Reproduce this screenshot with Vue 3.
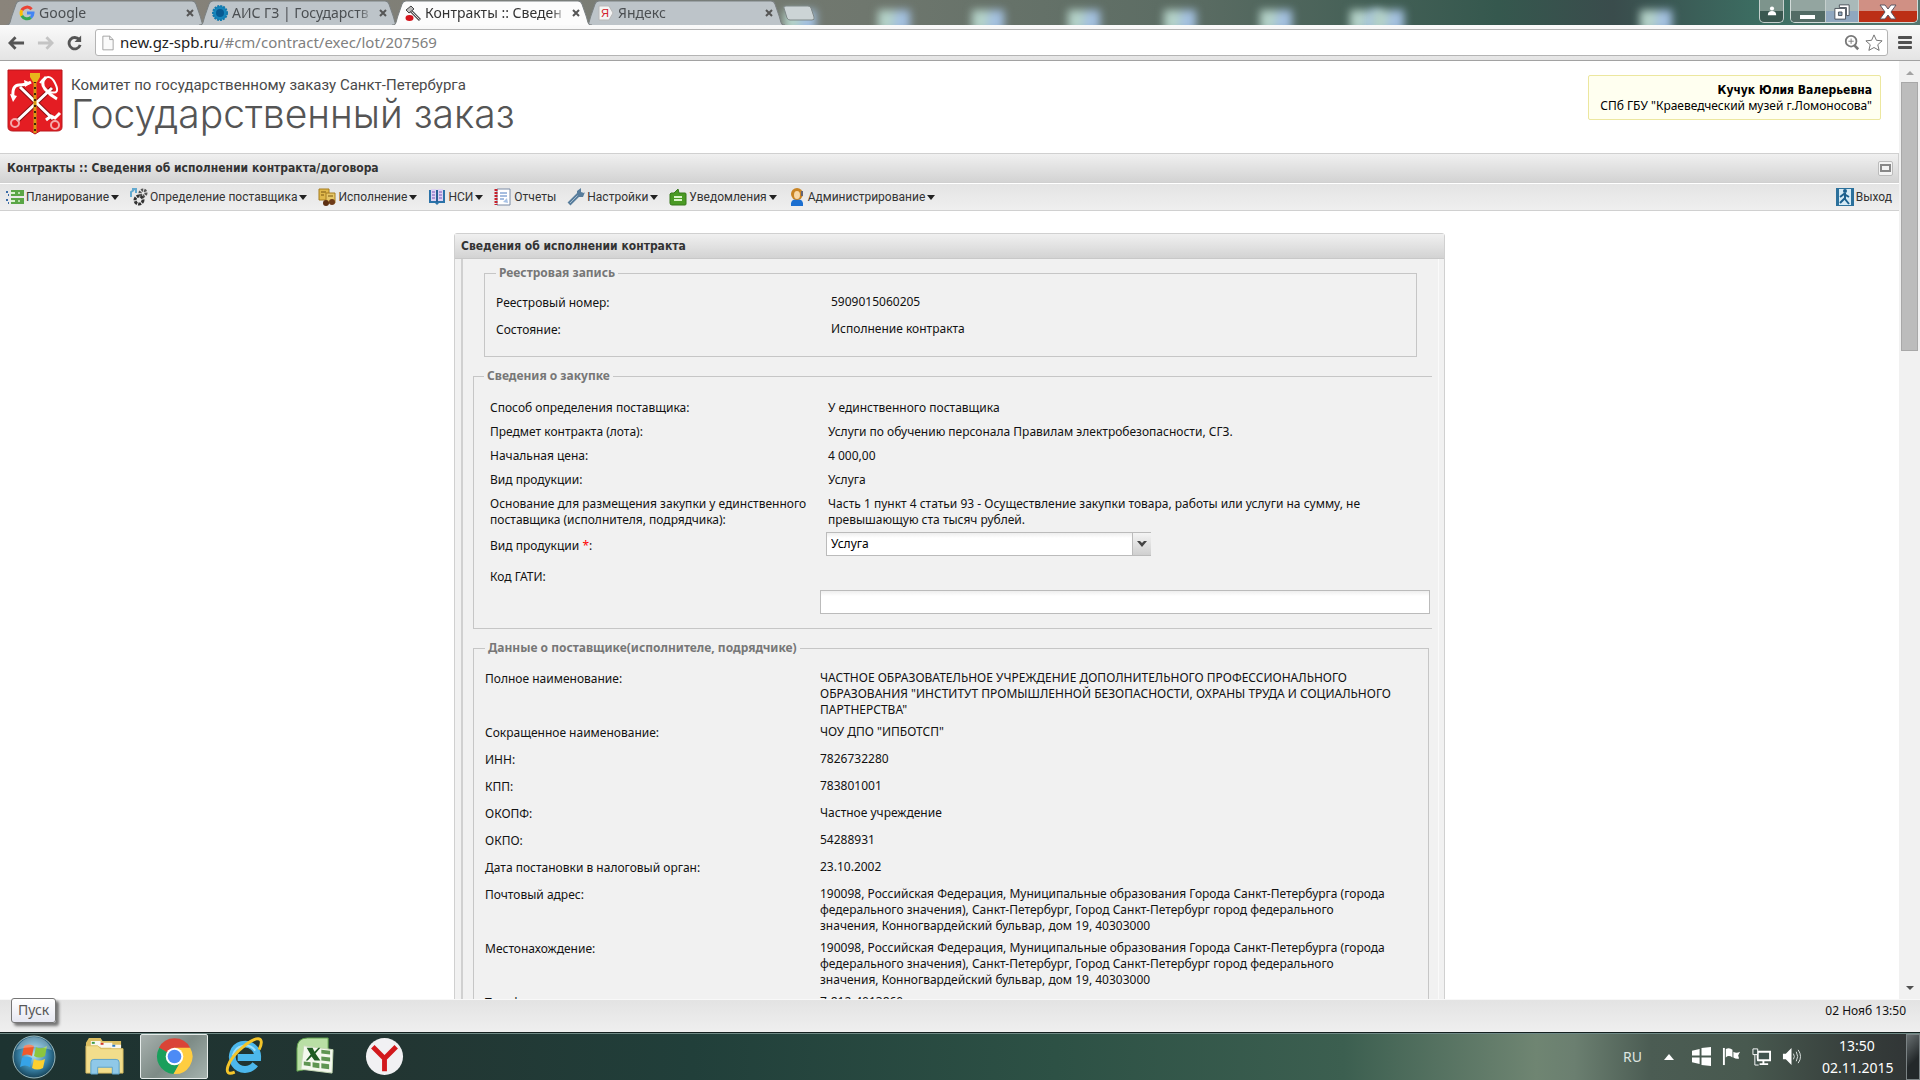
<template>
  <div class="screen">
    <header class="tab-strip">
      <span v-for="left in ghosts" :key="left" class="desk-ghost" :style="{ left: left + 'px' }"></span>
      <nav class="tabs">
        <button
          v-for="(tab, ind) in tabs"
          :key="tab.title"
          class="tab"
          :class="{ active: ind === activeTab }"
          @click="activeTab = ind"
        >
          <svg class="tab-shape" viewBox="0 0 200 24" preserveAspectRatio="none">
            <path d="M0 24 C5 24 4 20 6 15 L10 4 Q11 1 14 1 L186 1 Q189 1 190 4 L194 15 C196 20 195 24 200 24" />
          </svg>
          <svg v-if="tab.icon === 'google'" class="favicon" viewBox="0 0 16 16">
            <g fill="none" stroke-width="3">
              <path stroke="#ea4335" d="M12.6 4.2A6 6 0 0 0 2.8 5.2" />
              <path stroke="#fbbc05" d="M2.8 5.2a6 6 0 0 0 0 5.6" />
              <path stroke="#34a853" d="M2.8 10.8a6 6 0 0 0 9 1.7" />
              <path stroke="#4285f4" d="M11.8 12.5A6 6 0 0 0 14 8H8" />
            </g>
          </svg>
          <svg v-else-if="tab.icon === 'ais'" class="favicon" viewBox="0 0 16 16">
            <circle cx="8" cy="8" r="7" fill="#1685bb" stroke="#1279ad" stroke-width="2" stroke-dasharray="2 1" />
            <circle cx="8" cy="8" r="4" fill="#075a92" />
          </svg>
          <svg v-else-if="tab.icon === 'hammer'" class="favicon" viewBox="0 0 16 16">
            <path d="M5 5l10 10" stroke="#555" stroke-width="3" />
            <path d="M5.500 5.500l9 9" stroke="#ddd" stroke-width="1" />
            <path d="M1 5l5-4 3 3-5 4z" fill="#bbb" stroke="#444" />
            <ellipse cx="4.500" cy="13" rx="4" ry="3" fill="#d5141c" />
          </svg>
          <svg v-else class="favicon" viewBox="0 0 16 16">
            <path d="M1 1h10l4 7-4 7H1z" fill="#f4f4f4" stroke="#b9b9b9" />
            <text x="3" y="12" font-size="11" font-family="Liberation Sans" fill="#d3202c">Я</text>
          </svg>
          <span class="tab-title">{{ tab.title }}</span>
          <svg class="tab-close" viewBox="0 0 8 8"><path d="M1 1l6 6M7 1l-6 6" /></svg>
        </button>
        <button class="new-tab" aria-label="Новая вкладка">
          <svg viewBox="0 0 32 16"><path d="M1 3q-1-2 2-2h22q2 0 3 2l3 9q1 3-2 3H7q-2 0-3-2z" /></svg>
        </button>
      </nav>
      <div class="win-buttons">
        <button class="win user" aria-label="Профиль">
          <svg viewBox="0 0 12 12"><circle cx="6" cy="3" r="2.500" /><path d="M1 11q0-5 5-5t5 5z" /></svg>
        </button>
        <div class="win-group">
          <button class="win" aria-label="Свернуть">
            <svg viewBox="0 0 18 16"><path d="M1 11h15v4H1z" /></svg>
          </button>
          <button class="win light" aria-label="Восстановить">
            <svg viewBox="0 0 18 18">
              <path fill-rule="evenodd" d="M6 1h11v12h-3V4H6z" stroke="#454c55" />
              <path fill-rule="evenodd" d="M1 5h12v12H1zM5 9v4h4V9z" stroke="#454c55" />
            </svg>
          </button>
          <button class="win close" aria-label="Закрыть">
            <svg viewBox="0 0 18 16">
              <path d="M1 1h5l3 4 3-4h5l-5 7 5 7h-5l-3-4-3 4H1l5-7z" stroke="#5d5560" />
            </svg>
          </button>
        </div>
      </div>
    </header>

    <div class="toolbar">
      <button class="tool" aria-label="Назад">
        <svg viewBox="0 0 18 16"><path d="M2 8h15M8 2L2 8l6 6" stroke="#555" /></svg>
      </button>
      <button class="tool" aria-label="Вперед">
        <svg viewBox="0 0 18 16"><path d="M1 8h15M10 2l6 6-6 6" stroke="#c4c4c4" /></svg>
      </button>
      <button class="tool" aria-label="Обновить">
        <svg viewBox="0 0 18 16">
          <path d="M14 4.500A6 6 0 1 0 15 10" stroke="#555" />
          <path d="M16 0v7H9z" fill="#555" />
        </svg>
      </button>
      <div class="address">
        <svg class="page-icon" viewBox="0 0 14 18"><path d="M1 1h8l4 4v12H1zM9 1v4h4" /></svg>
        <span class="url"><b>new.gz-spb.ru</b>/#cm/contract/exec/lot/207569</span>
        <svg class="zoom-icon" viewBox="0 0 18 18">
          <circle cx="8" cy="7" r="6" /><path d="M8 4v6M5 7h6" stroke-width="1" /><path d="M12 12l4 4" stroke-width="3" />
        </svg>
        <svg class="star" viewBox="0 0 20 20">
          <path d="M10 1l2.700 6 6.300.6-4.800 4.300 1.500 6.300L10 15l-5.700 3.200 1.500-6.300L1 7.600 7.300 7z" />
        </svg>
      </div>
      <button class="burger" aria-label="Меню"><i></i><i></i><i></i></button>
    </div>

    <div class="viewport">
      <div class="page">
        <div class="site-head">
          <a class="logo" href="#">
            <svg class="crest" viewBox="0 0 56 66">
              <path d="M1 1h54v57q0 4-5 4H33l-5 3-5-3H6q-5 0-5-4z" fill="#e41d23" stroke="#b9171c" />
              <g fill="none" stroke="#8c1014" stroke-width="5">
                <path d="M10 52L45 19M46 50L13 18" />
              </g>
              <g fill="none" stroke="#fff" stroke-width="3">
                <path d="M10 52L45 19M46 50L13 18" />
                <path d="M6 28Q5 16 12 16T24 13" />
                <path d="M39 8Q33 14 38 20T50 30" />
                <path d="M33 14Q42 2 48 14T43 23" stroke-width="2" />
              </g>
              <path d="M3 25l3 8 4-6zM17 11l7 3-6 4z" fill="#fff" />
              <circle cx="8" cy="54" r="4" fill="none" stroke="#f3a9ab" stroke-width="2" />
              <circle cx="48" cy="56" r="4" fill="none" stroke="#f3a9ab" stroke-width="2" />
              <path d="M39 51l5-4 4 2 5-5" fill="none" stroke="#fff" stroke-width="3" />
              <path d="M28 8v56" stroke="#d99b14" stroke-width="3" />
              <path d="M28 12v52" stroke="#3d2a05" stroke-width="2" stroke-dasharray="2 4" />
              <path d="M23 4h10v4l-3 5h-4l-3-5z" fill="#e8b71c" />
            </svg>
            <span class="logo-text">
              <span class="logo-small">Комитет по государственному заказу Санкт-Петербурга</span>
              <span class="logo-big">Государственный заказ</span>
            </span>
          </a>
          <div class="user-box">
            <b>Кучук Юлия Валерьевна</b>
            <span>СПб ГБУ "Краеведческий музей г.Ломоносова"</span>
          </div>
        </div>

        <div class="title-bar">
          <h1>Контракты :: Сведения об исполнении контракта/договора</h1>
          <button class="restore" aria-label="Развернуть"><i></i></button>
        </div>

        <nav class="menu">
          <button v-for="item in menu" :key="item.title" class="menu-item">
            <svg class="menu-icon" viewBox="0 0 18 18">
              <template v-if="item.icon === 'plan'">
                <path d="M5 2h13v6H5zM5 10h13v6H5z" fill="#5aa646" />
                <path d="M5 5h4M5 13h4" stroke="#d9f2cf" stroke-width="2" />
                <path d="M0 4h2M0 12h2M2 7h1M2 15h1" stroke="#3b6ca8" stroke-width="2" />
                <circle cx="13" cy="5" r="1" fill="#d9f2cf" /><circle cx="13" cy="13" r="1" fill="#d9f2cf" />
              </template>
              <template v-else-if="item.icon === 'gears'">
                <circle cx="13" cy="5" r="3" fill="none" stroke="#555" stroke-width="3" stroke-dasharray="2 1" />
                <circle cx="9" cy="12" r="4" fill="none" stroke="#333" stroke-width="3" stroke-dasharray="3 1" />
                <path d="M1 9V4l3-2M2 1h4v4" fill="none" stroke="#63a9cf" stroke-width="2" />
              </template>
              <template v-else-if="item.icon === 'exec'">
                <path d="M1 1h10v11H1z" fill="#dfb84b" stroke="#a67c21" />
                <path d="M8 5h9v10H8z" fill="#e7c767" stroke="#a67c21" />
                <path d="M3 4h5M3 7h3M10 8h5" stroke="#7b5712" />
                <circle cx="8" cy="15" r="3" fill="#5c2f12" /><circle cx="14" cy="14" r="3" fill="#6e3b18" />
              </template>
              <template v-else-if="item.icon === 'book'">
                <path d="M1 2h16v13h-6l-2 2-2-2H1z" fill="#2a72a8" />
                <path d="M3 1h5l1 1 1-1h5v12h-5l-1 1-1-1H3z" fill="#dcd2f3" />
                <path d="M9 2v12" stroke="#2a5f94" stroke-width="2" />
                <path d="M4 4h3M4 7h3M4 10h3M11 4h3M11 7h3M11 10h3" stroke="#7a54b8" />
              </template>
              <template v-else-if="item.icon === 'report'">
                <path d="M3 1h13v16H3z" fill="#fff" stroke="#7a8ba5" />
                <path d="M2 1v16" stroke="#c8202a" stroke-width="3" stroke-dasharray="2 1" />
                <path d="M6 5h7M6 8h7M6 11h4" stroke="#4e7cc0" /><path d="M9 14l4-4 1 5z" fill="#a9c3e6" />
              </template>
              <template v-else-if="item.icon === 'wrench'">
                <path d="M2 16L12 6" stroke="#587d9c" stroke-width="4" />
                <path d="M3 15l9-9" stroke="#a4bccd" />
                <path d="M10 7V3l4-3v4l3 1 1-1-2 5h-4z" fill="#587d9c" />
              </template>
              <template v-else-if="item.icon === 'note'">
                <path d="M2 5h3l4-4 1 4h6q1 0 1 1v10q0 1-1 1H3q-2 0-2-2V6z" fill="#4a9a24" stroke="#36781a" />
                <path d="M5 9h8M5 12h8" stroke="#d9f4c8" stroke-width="2" />
              </template>
              <template v-else>
                <path d="M3 18q-1-7 6-7t6 7z" fill="#1c6fd0" />
                <circle cx="9" cy="6" r="6" fill="#c98424" /><ellipse cx="9" cy="7" rx="3" ry="4" fill="#f8d8a6" />
                <path d="M14 3v5" stroke="#667" stroke-width="2" />
              </template>
            </svg>
            <span>{{ item.title }}</span>
            <i v-if="item.arrow" class="caret"></i>
          </button>
          <button class="menu-item exit">
            <svg class="menu-icon" viewBox="0 0 18 18">
              <path d="M0 0h18v18H0z" fill="#2c719c" />
              <path d="M3 1h12v16H3z" fill="#d5eaf5" />
              <circle cx="9" cy="3" r="2" fill="#1b5f8d" />
              <path d="M9 5v6l4 5M9 10l-5 5M4 9l4-3 5 3" fill="none" stroke="#1b5f8d" stroke-width="2" />
            </svg>
            <span>Выход</span>
          </button>
        </nav>

        <main class="content">
          <section class="panel">
            <h2>Сведения об исполнении контракта</h2>
            <div class="panel-body">
              <fieldset class="registry">
                <legend>Реестровая запись</legend>
                <dl v-for="row in registry" :key="row[0]" class="row">
                  <dt>{{ row[0] }}:</dt>
                  <dd>{{ row[1] }}</dd>
                </dl>
              </fieldset>

              <fieldset class="purchase">
                <legend>Сведения о закупке</legend>
                <dl v-for="row in purchase" :key="row[0]" class="row">
                  <dt>{{ row[0] }}:</dt>
                  <dd>{{ row[1] }}</dd>
                </dl>
                <div class="select-row">
                  <label for="product">Вид продукции <em>*</em>:</label>
                  <div class="select-box">
                    <select id="product" v-model="product">
                      <option>Услуга</option>
                      <option>Товар</option>
                      <option>Работа</option>
                    </select>
                    <span class="select-arrow">
                      <svg viewBox="0 0 10 6"><path d="M0 0h3l2 2 2-2h3L5 6z" /></svg>
                    </span>
                  </div>
                </div>
                <label class="gati-label" for="gati">Код ГАТИ:</label>
                <input id="gati" v-model="gati" class="gati" type="text" />
              </fieldset>

              <fieldset class="supplier">
                <legend>Данные о поставщике(исполнителе, подрядчике)</legend>
                <dl v-for="row in supplier" :key="row[0]" class="row">
                  <dt>{{ row[0] }}:</dt>
                  <dd>{{ row[1] }}</dd>
                </dl>
              </fieldset>
            </div>
          </section>
        </main>
      </div>

      <div class="scrollbar">
        <i class="up"></i>
        <span class="thumb"></span>
        <i class="down"></i>
      </div>
    </div>

    <footer class="status-bar">
      <span class="tip">Пуск</span>
      <span>02 Нояб 13:50</span>
    </footer>

    <div class="taskbar">
      <button class="task" aria-label="Пуск">
        <svg class="orb" viewBox="0 0 44 44">
          <defs>
            <radialGradient id="orb" cx="50%" cy="45%" r="55%">
              <stop offset="0" stop-color="#b9e3f2" />
              <stop offset=".6" stop-color="#3a86ac" />
              <stop offset="1" stop-color="#174358" />
            </radialGradient>
          </defs>
          <circle cx="22" cy="22" r="21" fill="url(#orb)" stroke="#9bb9bd" />
          <path d="M12 11q5-3 10 0l-2 10q-5-3-10 0z" fill="#f0592b" />
          <path d="M24 12q5 3 11-1l-2 10q-6 3-11 0z" fill="#8cc63e" />
          <path d="M10 23q5-3 10 0l-2 9q-5-3-10 0z" fill="#36a3e8" />
          <path d="M22 24q5 3 11 0l-2 9q-6 3-11 0z" fill="#fdd02f" />
          <path d="M4 15Q10 2 22 2t18 13Q22 9 4 15z" fill="#fff" opacity=".3" />
        </svg>
      </button>
      <button class="task" aria-label="Проводник">
        <svg class="task-icon" viewBox="0 0 40 40">
          <path d="M1 6l3-5h12l2 3h19v32H1z" fill="#dcbf62" />
          <path d="M6 4h10v6H6zM16 6h12v5H16zM27 8h10v5H27z" fill="#f7f7f0" />
          <path d="M7 5h3v2H7z" fill="#399a46" /><path d="M16 6h3v2h-3z" fill="#d4372b" /><path d="M28 8h3v2h-3z" fill="#2b7ac4" />
          <path d="M1 9h12l3 3h23v25H1z" fill="#f2dd8b" stroke="#d9bd63" />
          <path d="M6 38V26q0-3 3-3h23q3 0 3 3v12h-7v-7H13v7z" fill="#8fc8e8" stroke="#5ba1c9" />
        </svg>
      </button>
      <button class="task current" aria-label="Google Chrome">
        <svg class="task-icon" viewBox="0 0 40 40">
          <path d="M20 20L4 11A18 18 0 0 1 36 11z" fill="#da4437" />
          <path d="M20 20L4.400 11A18 18 0 0 0 19 38l8-14z" fill="#1a9f5c" />
          <path d="M20 11h16A18 18 0 0 1 19 38l9-16z" fill="#ffcd40" />
          <circle cx="20" cy="20" r="9" fill="#fff" /><circle cx="20" cy="20" r="7" fill="#4c8bf5" />
        </svg>
      </button>
      <button class="task" aria-label="Internet Explorer">
        <svg class="task-icon" viewBox="0 0 40 40">
          <path d="M31 28A13 13 0 1 1 33.500 21H13" fill="none" stroke="#4cb8ec" stroke-width="7" />
          <path d="M8 19A13 13 0 0 1 31 14" fill="none" stroke="#9de0fa" stroke-width="2" />
          <path d="M10 36Q0 40 3 30T21 8Q35-2 37 4q1 3-2 9" fill="none" stroke="#f4c52a" stroke-width="3" />
        </svg>
      </button>
      <button class="task" aria-label="Excel">
        <svg class="task-icon" viewBox="0 0 40 40">
          <path d="M2 12Q2 1 13 1h21v28L2 35z" fill="#b9dfa5" stroke="#5d9c4a" />
          <path d="M9 9l30 4-1 24-32-4z" fill="#f4f8ee" stroke="#c4d9b4" />
          <path d="M27 13l9 1v4l-9-1zM27 20l9 1v4l-9-1zM27 27l8 1v5l-8-1zM18 26l7 1v5l-7-1zM9 25l7 1v4l-7-1z" fill="#5f9552" />
          <path d="M12 11h6l2 4 4-4h2l-5 6 5 7h-6l-3-4-4 4h-2l5-6z" fill="#1f5c22" />
        </svg>
      </button>
      <button class="task" aria-label="Яндекс">
        <svg class="task-icon" viewBox="0 0 40 40">
          <circle cx="20" cy="20" r="19" fill="#f1f1f3" />
          <path d="M8 10l12 12L32 10M20 21v14" fill="none" stroke="#d2191c" stroke-width="5" />
        </svg>
      </button>

      <div class="tray">
        <span class="lang">RU</span>
        <svg class="tray-up" viewBox="0 0 10 6"><path d="M0 6l5-6 5 6z" fill="#fff" /></svg>
        <svg class="tray-icon" viewBox="0 0 20 20">
          <path d="M0 4l8-2v7H0zM10 1l10-1v9H10zM0 11h8v7l-8-2zM10 11h10v9l-10-1z" fill="#fff" />
        </svg>
        <svg class="tray-icon" viewBox="0 0 20 20">
          <path d="M2 1v18" stroke="#fff" stroke-width="2" />
          <path d="M4 2q4-2 7 1v8q-4-3-7 0zM12 5q3 2 7 0l-2 4 1 3q-3 1-6-1z" fill="#fff" />
        </svg>
        <svg class="tray-icon" viewBox="0 0 20 20">
          <path d="M6 5h13v9H6zM12 14v4M8 18h9" fill="#41544f" stroke="#fff" stroke-width="2" />
          <path d="M1 2h5v6H1zM3 8v11h4" fill="#41544f" stroke="#fff" stroke-width="1" />
        </svg>
        <svg class="tray-icon" viewBox="0 0 20 20">
          <path d="M1 7h3l6-6v18l-6-6H1z" fill="#fff" />
          <path d="M12 7q2 3 0 6M15 5q3 5 0 10M17 3q5 7 0 14" fill="none" stroke="#e0e6e4" />
        </svg>
        <div class="clock">
          <span>13:50</span>
          <span>02.11.2015</span>
        </div>
        <button class="show-desktop" aria-label="Показать рабочий стол"></button>
      </div>
    </div>
  </div>
</template>

<script setup>
import { ref } from "vue";

const activeTab = ref(2);
const product = ref("Услуга");
const gati = ref("");

const tabs = [
  { title: "Google", icon: "google" },
  { title: "АИС ГЗ | Государств", icon: "ais" },
  { title: "Контракты :: Сведен", icon: "hammer" },
  { title: "Яндекс", icon: "yandex" },
];

// blurred desktop shortcuts behind the glass title bar
const ghosts = [784, 878, 972, 1068, 1164, 1260, 1350, 1372, 1640];

const menu = [
  { title: "Планирование", icon: "plan", arrow: true },
  { title: "Определение поставщика", icon: "gears", arrow: true },
  { title: "Исполнение", icon: "exec", arrow: true },
  { title: "НСИ", icon: "book", arrow: true },
  { title: "Отчеты", icon: "report", arrow: false },
  { title: "Настройки", icon: "wrench", arrow: true },
  { title: "Уведомления", icon: "note", arrow: true },
  { title: "Администрирование", icon: "admin", arrow: true },
];

const registry = [
  ["Реестровый номер", "5909015060205"],
  ["Состояние", "Исполнение контракта"],
];

const purchase = [
  ["Способ определения поставщика", "У единственного поставщика"],
  ["Предмет контракта (лота)", "Услуги по обучению персонала Правилам электробезопасности, СГЗ."],
  ["Начальная цена", "4 000,00"],
  ["Вид продукции", "Услуга"],
  [
    "Основание для размещения закупки у единственного\nпоставщика (исполнителя, подрядчика)",
    "Часть 1 пункт 4 статьи 93 - Осуществление закупки товара, работы или услуги на сумму, не\nпревышающую ста тысяч рублей.",
  ],
];

const address =
  "190098, Российская Федерация, Муниципальные образования Города Санкт-Петербурга (города\nфедерального значения), Санкт-Петербург, Город Санкт-Петербург город федерального\nзначения, Конногвардейский бульвар, дом 19, 40303000";

const supplier = [
  [
    "Полное наименование",
    'ЧАСТНОЕ ОБРАЗОВАТЕЛЬНОЕ УЧРЕЖДЕНИЕ ДОПОЛНИТЕЛЬНОГО ПРОФЕССИОНАЛЬНОГО\nОБРАЗОВАНИЯ "ИНСТИТУТ ПРОМЫШЛЕННОЙ БЕЗОПАСНОСТИ, ОХРАНЫ ТРУДА И СОЦИАЛЬНОГО\nПАРТНЕРСТВА"',
  ],
  ["Сокращенное наименование", 'ЧОУ ДПО "ИПБОТСП"'],
  ["ИНН", "7826732280"],
  ["КПП", "783801001"],
  ["ОКОПФ", "Частное учреждение"],
  ["ОКПО", "54288931"],
  ["Дата постановки в налоговый орган", "23.10.2002"],
  ["Почтовый адрес", address],
  ["Местонахождение", address],
  ["Телефон", "7-812-4013860"],
];
</script>

<style>
body {
  margin: 0;
  overflow: hidden;
}
</style>

<style scoped>
.screen {
  display: flex;
  flex-direction: column;
  height: 100vh;
  background: #fff;
  color: #111;
  font-family: "Noto Sans", "Open Sans", sans-serif;
  font-size: 12px;
  line-height: 16px;
}
.screen * {
  box-sizing: border-box;
}
button {
  padding: 0;
  border: 0;
  background: none;
  color: inherit;
  font: inherit;
}
svg {
  display: block;
  flex: none;
}

/* browser tabs */
.tab-strip {
  position: relative;
  display: flex;
  justify-content: space-between;
  height: 25px;
  overflow: hidden;
  background: linear-gradient(90deg, #8a847b 0, #7b7d75 30%, #6f776e 45%, #5b6c63 62%, #35584e 78%, #3a4c4c 84%, #3c6f63 92%, #54766f);
}
.desk-ghost {
  position: absolute;
  top: 10px;
  width: 32px;
  height: 22px;
  background: linear-gradient(100deg, #b4d2c8 40%, #a3c0e0 60%);
  filter: blur(4px);
}
.tabs {
  position: relative;
  display: flex;
  padding-left: 6px;
}
.tab {
  position: relative;
  z-index: 0;
  display: flex;
  align-items: center;
  width: 200px;
  height: 25px;
  margin-right: -7px;
  padding: 0 12px 0 13px;
  color: #4b4f52;
  font-size: 14px;
}
.tab.active {
  z-index: 1;
  color: #333;
}
.tab-shape {
  position: absolute;
  inset: 0;
  z-index: -1;
  width: 100%;
  height: 100%;
}
.tab-shape path {
  fill: #bdc4c9;
  stroke: #7b8082;
}
.tab.active .tab-shape path {
  fill: #fcfcfc;
}
.favicon {
  width: 16px;
  height: 16px;
  margin-right: 4px;
}
.tab-title {
  flex: 1;
  overflow: hidden;
  line-height: 22px;
  text-align: left;
  white-space: nowrap;
  mask-image: linear-gradient(90deg, #000 90%, transparent);
}
.tab-close {
  width: 8px;
  height: 8px;
  margin-left: 6px;
  stroke: #555;
  stroke-width: 2;
}
.new-tab svg {
  width: 32px;
  height: 16px;
  margin-left: 5px;
  fill: #ccd4d6;
  stroke: #7f8888;
}
.win-buttons {
  display: flex;
  gap: 6px;
  padding-right: 2px;
}
.win-group {
  display: flex;
  overflow: hidden;
  height: 23px;
  border: 1px solid #d3dcda;
  border-top: 0;
  border-radius: 0 0 5px 5px;
}
.win {
  display: flex;
  align-items: center;
  justify-content: center;
  width: 35px;
  height: 23px;
  border-right: 1px solid #c5cfcd;
  background: linear-gradient(#93a5a0 50%, #536b65 50%);
}
.win svg {
  width: 18px;
  height: 16px;
  fill: #fff;
}
.win.user {
  width: 25px;
  border: 1px solid #c5cfcd;
  border-top: 0;
  border-radius: 0 0 5px 5px;
  background: linear-gradient(#7d948c 50%, #3a5850 50%);
}
.win.user svg {
  width: 10px;
  height: 10px;
}
.win.light {
  width: 33px;
  background: linear-gradient(#a9b9b9 50%, #8fa7bf 50%);
}
.win.close {
  width: 58px;
  border: 0;
  background: linear-gradient(#d09084 50%, #bc2f16 50%);
}

/* address bar */
.toolbar {
  display: flex;
  align-items: center;
  height: 36px;
  padding: 0 8px;
  border-bottom: 1px solid #a2a2a2;
  background: linear-gradient(#fafafa, #e4e4e4);
}
.tool {
  margin-right: 12px;
}
.tool svg {
  width: 17px;
  height: 16px;
  fill: none;
  stroke-width: 3;
}
.address {
  display: flex;
  flex: 1;
  align-items: center;
  height: 27px;
  padding: 0 4px 0 6px;
  border: 1px solid #b4b4b4;
  border-radius: 3px;
  background: #fff;
}
.page-icon {
  width: 12px;
  height: 16px;
  margin-right: 6px;
  fill: #fafafa;
  stroke: #999;
}
.url {
  flex: 1;
  padding-bottom: 2px;
  color: #808080;
  font-size: 15px;
  line-height: 20px;
}
.url b {
  color: #222;
  font-weight: 400;
}
.zoom-icon {
  width: 16px;
  height: 16px;
  margin-right: 5px;
  fill: none;
  stroke: #777;
  stroke-width: 2;
}
.star {
  width: 18px;
  height: 18px;
  fill: #fff;
  stroke: #666;
}
.burger {
  display: grid;
  gap: 2px;
  margin-left: 10px;
}
.burger i {
  width: 14px;
  height: 3px;
  border-radius: 1px;
  background: #505050;
}

/* site */
.viewport {
  display: flex;
  flex: 1;
  min-height: 0;
}
.page {
  display: flex;
  flex: 1;
  flex-direction: column;
  min-width: 0;
}
.site-head {
  display: flex;
  align-items: flex-start;
  justify-content: space-between;
  height: 92px;
  padding: 8px 18px 0 7px;
}
.logo {
  display: flex;
  gap: 8px;
  color: #555;
  text-decoration: none;
}
.crest {
  width: 56px;
  height: 66px;
}
.logo-text {
  display: flex;
  flex-direction: column;
  padding-top: 7px;
}
.logo-small {
  color: #4a4a4a;
  font-family: Roboto, sans-serif;
  font-size: 15px;
  line-height: 18px;
}
.logo-big {
  font-family: Inter, sans-serif;
  font-size: 39px;
  font-weight: 300;
  line-height: 40px;
}
.user-box {
  display: flex;
  flex-direction: column;
  min-width: 293px;
  height: 45px;
  margin-top: 6px;
  padding: 6px 8px;
  border: 1px solid #ece79f;
  border-radius: 2px;
  background: #fffff0;
  color: #000;
  text-align: right;
  white-space: nowrap;
}
.title-bar {
  display: flex;
  align-items: center;
  justify-content: space-between;
  height: 30px;
  padding: 0 5px 0 7px;
  border: 1px solid #d0d0d0;
  border-left: 0;
  background: linear-gradient(#f0f0f0, #d3d3d3);
}
h1,
h2 {
  margin: 0;
  color: #333;
  font-size: 12px;
  font-weight: 700;
}
h1,
h2,
.user-box b {
  font-family: "DejaVu Sans Condensed", "Noto Sans", sans-serif;
}
.restore {
  width: 15px;
  height: 15px;
  border: 1px solid #bbb;
  border-radius: 2px;
  background: #f4f4f4;
}
.restore i {
  display: block;
  height: 8px;
  margin: 0 1px;
  border: 2px solid #888;
}
.menu {
  display: flex;
  gap: 11px;
  height: 28px;
  padding: 0 7px 0 6px;
  border-top: 1px solid #fff;
  border-bottom: 1px solid #d0d0d0;
  background: linear-gradient(#e4e4e4, #efefef);
  color: #333;
  font-family: Roboto, "Liberation Sans", sans-serif;
  font-size: 12px;
}
.menu-item {
  display: flex;
  gap: 2px;
  align-items: center;
}
.menu-icon {
  width: 18px;
  height: 18px;
}
.exit {
  margin-left: auto;
}
.caret {
  border: 4px solid transparent;
  border-top: 5px solid #222;
  border-bottom: 0;
}

.content {
  flex: 1;
  min-height: 0;
  padding-top: 22px;
  overflow: hidden;
}
.panel {
  max-width: 991px;
  margin: 0 auto;
  border: 1px solid #d0d0d0;
  border-radius: 3px 3px 0 0;
  background: #f1f1f1;
}
.panel h2 {
  padding: 4px 6px;
  border-bottom: 1px solid #c8c8c8;
  background: linear-gradient(#f0f0f0, #d3d3d3);
}
.panel-body {
  margin: 0 5px 0 6px;
  padding: 5px 6px 0 10px;
  border-right: 1px solid #fafafa;
  border-left: 2px solid #d0d0d0;
}
fieldset {
  min-width: 0;
  margin: 0;
  border: 1px solid #c6c6c6;
}
legend {
  padding: 0 3px;
  color: #777;
  font-weight: 700;
  line-height: 18px;
}
.registry {
  margin: 0 15px 10px 11px;
  padding: 12px 11px 8px;
}
.purchase {
  margin-bottom: 10px;
  padding: 15px 2px 14px 16px;
  border-right: 0;
}
.supplier {
  margin-right: 3px;
  padding: 13px 11px 0;
}
.purchase legend {
  margin-left: -6px;
}
.row {
  display: grid;
  grid-template-columns: 335px 1fr;
  min-height: 21px;
  margin: 0 0 6px;
  white-space: pre-line;
}
.row dt {
  padding-top: 1px;
}
.row dd {
  margin: 0;
}
.purchase .row {
  grid-template-columns: 338px 1fr;
  min-height: 16px;
  margin-bottom: 8px;
}
.purchase .row dt {
  padding: 0;
}
.select-row {
  display: grid;
  grid-template-columns: 336px 325px;
  margin-top: -4px;
}
.select-row label {
  padding-top: 6px;
}
.select-row em {
  color: #f00;
  font-style: normal;
}
.select-box {
  position: relative;
}
.select-box select {
  display: block;
  appearance: none;
  width: 100%;
  height: 24px;
  padding: 0 22px 0 4px;
  border: 1px solid #bbb;
  border-radius: 0;
  background: linear-gradient(#eee, #fff 5px);
  color: #000;
  font: inherit;
}
.select-arrow {
  position: absolute;
  top: 1px;
  right: 0;
  display: flex;
  align-items: center;
  justify-content: center;
  width: 19px;
  height: 22px;
  border-left: 1px solid #bbb;
  background: linear-gradient(#f4f4f4, #cfcfcf);
  pointer-events: none;
}
.select-arrow svg {
  width: 10px;
  height: 6px;
  fill: #444;
}
.gati-label {
  display: block;
  padding: 13px 0 5px;
}
.gati {
  display: block;
  width: calc(100% - 330px);
  height: 24px;
  margin-left: 330px;
  border: 1px solid #bbb;
  background: linear-gradient(#eee, #fff 5px);
}

.scrollbar {
  display: flex;
  flex-direction: column;
  align-items: center;
  width: 21px;
  background: #f1f1f1;
}
.up,
.down {
  margin: 10px 0 7px;
  border: 4px solid transparent;
  border-top: 0;
  border-bottom: 4px solid #a3a3a3;
}
.thumb {
  width: 17px;
  height: 269px;
  border: 1px solid #a8a8a8;
  background: #bcbcbc;
}
.down {
  margin: auto 0 9px;
  border-top: 4px solid #505050;
  border-bottom: 0;
}

.status-bar {
  position: relative;
  display: flex;
  align-items: flex-start;
  justify-content: flex-end;
  height: 33px;
  padding: 3px 14px 0;
  border-top: 1px solid #f8f8f8;
  background: linear-gradient(#e3e3e3, #efefef);
}
.tip {
  position: absolute;
  top: -2px;
  left: 11px;
  height: 25px;
  padding: 3px 6px;
  border: 1px solid #767676;
  border-radius: 3px;
  background: linear-gradient(#fff, #e6e7f1);
  box-shadow: 3px 3px 3px rgba(0, 0, 0, 0.5);
  color: #575757;
  font-size: 14px;
}

/* windows taskbar */
.taskbar {
  display: flex;
  align-items: center;
  height: 48px;
  border-top: 1px solid #14201f;
  background: linear-gradient(90deg, #1d3331 0, #223532 20%, #213f3a 36%, #2d5145 55%, #3c5f50 70%, #6f8572 80%, #6b7f70 82%, #4b5c53 86%, #48594f 91%, #353c3a 97%, #303435);
  box-shadow: inset 0 1px #6f8985;
}
.task {
  display: flex;
  align-items: center;
  justify-content: center;
  width: 68px;
  height: 45px;
  margin-right: 2px;
}
.orb {
  width: 44px;
  height: 44px;
}
.task-icon {
  width: 39px;
  height: 39px;
}
.current {
  border: 1px solid #e6ecea;
  border-radius: 2px;
  background: linear-gradient(135deg, #a8b1ae, #7d8b86 50%, #a5b3ae);
}
.tray {
  display: flex;
  align-items: center;
  height: 100%;
  margin-left: auto;
  color: #fff;
}
.lang {
  margin-right: 22px;
  color: #dfe6e2;
  font-size: 14px;
}
.tray-up {
  width: 10px;
  height: 6px;
  margin-right: 18px;
}
.tray-icon {
  width: 19px;
  height: 19px;
  margin-right: 11px;
}
.clock {
  display: flex;
  flex-direction: column;
  width: 70px;
  margin: 0 14px 0 10px;
  font-size: 14px;
  line-height: 22px;
  text-align: center;
}
.show-desktop {
  width: 14px;
  height: 46px;
  border: 1px solid #7b8385;
  background: linear-gradient(135deg, #697072, #23282a 60%);
}
</style>
